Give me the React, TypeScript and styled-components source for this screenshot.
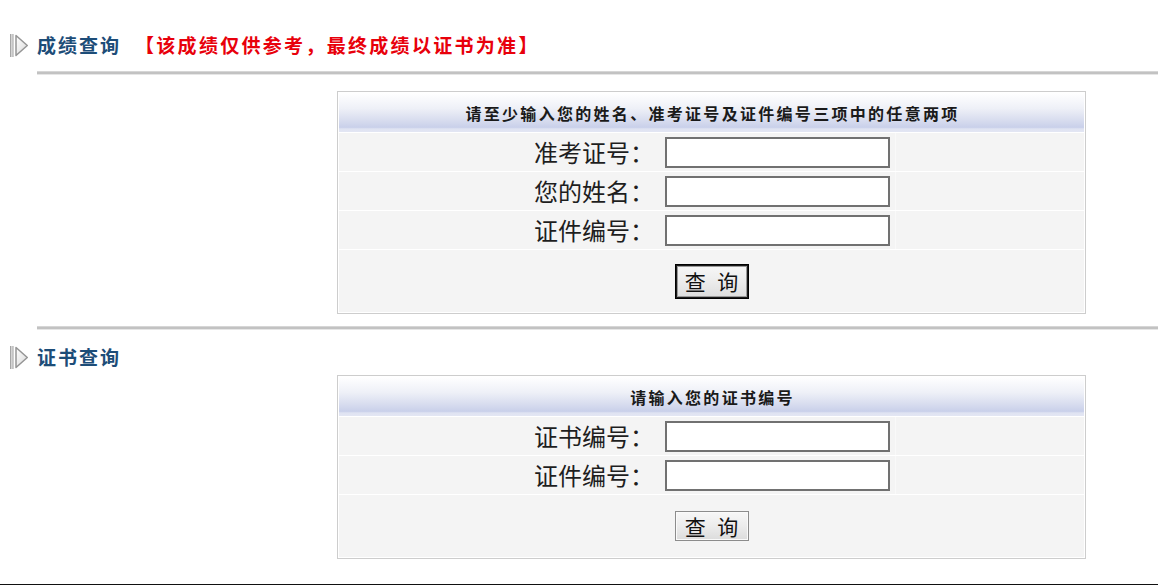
import React from 'react';
import styled, { createGlobalStyle } from 'styled-components';

const Global = createGlobalStyle`
  html, body { margin: 0; padding: 0; background: #fff; }
  body {
    font-family: "Noto Sans CJK SC", "Noto Sans", sans-serif;
    width: 1158px;
    height: 586px;
    overflow: hidden;
    color: #222;
  }
`;

const Page = styled.div`
  display: flex;
  flex-direction: column;
`;

const TitleRow = styled.div<{ $top: number }>`
  display: flex;
  align-items: center;
  gap: 9px;
  height: 22px;
  margin-top: ${(p) => p.$top}px;
  padding-left: 10px;
  white-space: nowrap;
`;

const TitleText = styled.span`
  font-size: 19px;
  font-weight: 700;
  letter-spacing: 2px;
  line-height: 22px;
  color: #1d4d78;
`;

const Notice = styled.span`
  font-size: 19px;
  font-weight: 700;
  letter-spacing: 2.3px;
  line-height: 22px;
  color: #e8000b;
  margin-left: 5px;
`;

const Divider = styled.div<{ $top: number }>`
  margin-top: ${(p) => p.$top}px;
  margin-left: 37px;
  height: 2px;
  border-top: 1px solid #d6d6d6;
  border-bottom: 1px solid #e6e6e6;
  background: #c2c2c2;
`;

const Panel = styled.div<{ $top: number }>`
  margin-top: ${(p) => p.$top}px;
  margin-left: 337px;
  width: 749px;
  box-sizing: border-box;
  border: 1px solid #cdcdcd;
  padding: 1px;
  background: #fff;
  display: flex;
  flex-direction: column;
  gap: 1px;
`;

const PanelHeader = styled.div`
  height: 39px;
  display: flex;
  align-items: center;
  justify-content: center;
  padding-left: 2px;
  background: linear-gradient(to bottom, #ffffff 0%, #eef0f7 40%, #d6dbee 72%, #c9d0ea 88%, #dfe3f2 92%, #e3e6f3 100%);
  font-size: 16px;
  font-weight: 700;
  letter-spacing: 2.3px;
  color: #1a1a1a;
  line-height: 20px;
`;

const FieldRow = styled.div`
  display: grid;
  grid-template-columns: 317px 240px 1fr;
  height: 38px;
  background: #f4f4f4;
`;

const Cell = styled.div`
  display: flex;
  align-items: center;
`;

const LabelCell = styled(Cell)`
  justify-content: flex-end;
  padding-right: 2px;
  font-size: 24px;
  line-height: 30px;
  color: #1e1e1e;
  white-space: nowrap;
`;

const InputCell = styled(Cell)`
  padding-left: 9px;
  border-right: 1px solid #f9f9f9;
`;

const TextInput = styled.input`
  width: 225px;
  height: 31px;
  box-sizing: border-box;
  border: 2px solid #717171;
  background: #fff;
  margin: 0;
  padding: 0 4px;
  outline: none;
`;

const ButtonRow = styled.div`
  height: 62px;
  background: #f4f4f4;
  display: flex;
  align-items: center;
  justify-content: center;
`;

const QueryButton = styled.button<{ $focused?: boolean }>`
  width: 74px;
  height: ${(p) => (p.$focused ? 35 : 30)}px;
  box-sizing: border-box;
  margin: 0;
  padding: 0;
  border: 1px solid ${(p) => (p.$focused ? '#000' : '#8c8c8c')};
  box-shadow: ${(p) => (p.$focused ? 'inset 0 0 0 1px #1a1a1a, inset 0 0 0 2px #9a9a9a' : 'inset 0 0 0 1px #fafafa')};
  background: linear-gradient(to bottom, #f7f7f7 0%, #ececec 50%, #dcdcdc 100%);
  font-family: "Noto Sans CJK SC", sans-serif;
  font-size: 21px;
  line-height: 24px;
  color: #111;
  word-spacing: 7px;
  cursor: pointer;
`;

const Footer = styled.div`
  margin-top: 25px;
  height: 1px;
  background: #111;
`;

const Arrow: React.FC = () => (
  <svg width="18" height="23" viewBox="0 0 18 23">
    <defs>
      <linearGradient id="barg" x1="0" x2="1" y1="0" y2="0">
        <stop offset="0" stopColor="#8f8f8f" />
        <stop offset="0.5" stopColor="#e0e0e0" />
        <stop offset="1" stopColor="#a0a0a0" />
      </linearGradient>
      <linearGradient id="trig" x1="0" x2="1" y1="0" y2="1">
        <stop offset="0" stopColor="#ffffff" />
        <stop offset="1" stopColor="#d8d8d8" />
      </linearGradient>
    </defs>
    <rect x="0" y="0" width="3.5" height="23" fill="url(#barg)" />
    <polygon points="6,1.5 17.3,11.5 6,21.5" fill="url(#trig)" stroke="#959595" strokeWidth="1.5" strokeLinejoin="round" />
  </svg>
);

type Field = { label: string };

const Form: React.FC<{ top: number; heading: string; fields: Field[]; focused?: boolean }> = ({ top, heading, fields, focused }) => (
  <Panel $top={top}>
    <PanelHeader>{heading}</PanelHeader>
    {fields.map((f) => (
      <FieldRow key={f.label}>
        <LabelCell>{f.label}</LabelCell>
        <InputCell>
          <TextInput type="text" />
        </InputCell>
        <Cell />
      </FieldRow>
    ))}
    <ButtonRow>
      <QueryButton $focused={focused}>查 询</QueryButton>
    </ButtonRow>
  </Panel>
);

export default function App() {
  return (
    <>
      <Global />
      <Page>
        <TitleRow $top={34}>
          <Arrow />
          <TitleText>成绩查询</TitleText>
          <Notice>【该成绩仅供参考，最终成绩以证书为准】</Notice>
        </TitleRow>
        <Divider $top={15} />
        <Form
          top={16}
          heading="请至少输入您的姓名、准考证号及证件编号三项中的任意两项"
          fields={[{ label: '准考证号：' }, { label: '您的姓名：' }, { label: '证件编号：' }]}
          focused
        />
        <Divider $top={12} />
        <TitleRow $top={16}>
          <Arrow />
          <TitleText>证书查询</TitleText>
        </TitleRow>
        <Form
          top={7}
          heading="请输入您的证书编号"
          fields={[{ label: '证书编号：' }, { label: '证件编号：' }]}
        />
        <Footer />
      </Page>
    </>
  );
}
